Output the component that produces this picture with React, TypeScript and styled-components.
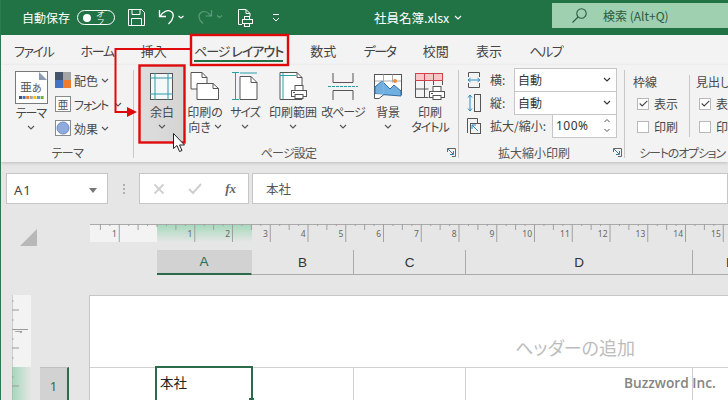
import React from "react";
import styled, { createGlobalStyle } from "styled-components";

const G = "#217346";
const FONT = `"Noto Sans CJK JP", "Noto Sans", sans-serif`;

const Global = createGlobalStyle`
  html, body { margin: 0; padding: 0; background: #e6e6e6; }
  body { font-family: ${FONT}; font-feature-settings: "palt"; }
  * { box-sizing: border-box; }
`;

const Window = styled.div`
  position: relative; width: 728px; height: 400px; overflow: hidden;
  background: #e6e6e6; border-left: 1px solid #2c7a50; display: flex; flex-direction: column;
`;
const TitleBar = styled.header`
  height: 35px; margin-left: -1px; background: ${G}; display: flex; align-items: center; color: #fff; flex: none;
`;
const AutoSave = styled.span`font-size: 12px; margin-left: 22px; width: 55px; color: #fff;`;
const Toggle = styled.span`
  width: 38px; height: 15px; border: 1px solid #fff; border-radius: 8px; display: flex; align-items: center;
  padding: 0 4px; gap: 5px; font-size: 8px; font-style: italic; line-height: 1; color: #fff;
  &::before { content: ""; width: 8px; height: 8px; border-radius: 50%; background: #fff; margin-left: 1px; }
`;
const Qat = styled.span<{ $l: number }>`display: flex; margin-left: ${p => p.$l}px; flex: none;`;
const FileName = styled.span`font-size: 12.5px; display: flex; align-items: center; gap: 5px; width: 178px; color: #fff;`;
const Search = styled.div`
  width: 176px; height: 25px; margin-bottom: 5px; background: #9fd0b0; display: flex; align-items: center; color: #2a5c40;
  font-size: 12px; padding-left: 20px; gap: 16px;
`;

const TabBar = styled.nav`
  height: 30px; background: #f3f3f3; display: flex; padding-left: 13px; gap: 27.2px; flex: none;
`;
const Tab = styled.span<{ $on?: boolean; $kana?: boolean }>`
  position: relative; font-size: 13px; line-height: 31px; color: #444; white-space: nowrap;
  ${p => p.$kana && `letter-spacing: -1.4px;`}
  ${p => p.$on && `letter-spacing: -1px; &::after{content:"";position:absolute;left:0;right:0;bottom:3px;height:2.5px;background:${G};}`}
`;
const Strong = styled.b`font-weight: 500;`;

const Ribbon = styled.section`
  height: 97px; background: #f3f3f3; display: flex; flex: none; color: #484848; font-size: 12px;
  box-shadow: 0 1px 3px rgba(0,0,0,.18);
`;
const Group = styled.div<{ $w: number; $last?: boolean }>`
  width: ${p => p.$w}px; flex: none; display: flex; flex-direction: column; position: relative;
  ${p => !p.$last && `&::after{content:"";position:absolute;right:0;top:5px;bottom:4px;width:1px;background:#c8c8c8;}`}
`;
const GroupBody = styled.div<{ $pl?: number }>`
  height: 80px; display: flex; padding-left: ${p => p.$pl ?? 0}px; flex: none;
`;
const GroupFoot = styled.div<{ $pr?: number; $pl?: number; $ls?: number }>`
  flex: 1; display: grid; grid-template-columns: 1fr auto 1fr; align-items: center; font-size: 12px; color: #555;
  padding: 0 ${p => p.$pr ?? 0}px 2px ${p => p.$pl ?? 0}px; line-height: 1; white-space: nowrap;
  letter-spacing: ${p => p.$ls ?? 0}px;
  & > span { grid-column: 2; }
`;
const Launcher = styled.svg`justify-self: end; margin-right: -13px; grid-column: 3;`;
const LargeBtn = styled.div<{ $w: number; $hot?: boolean; $top?: number }>`
  width: ${p => p.$w}px; flex: none; height: 78px; padding-top: ${p => p.$top ?? 7}px; display: flex; flex-direction: column; align-items: center;
  ${p => p.$hot && `background: linear-gradient(90deg,#dedede,#d4d4d4);`}
`;
const IconSlot = styled.div<{ $h?: number; $mb?: number }>`
  height: ${p => p.$h ?? 28}px; margin-bottom: ${p => p.$mb ?? 4}px; flex: none; display: flex; align-items: center; justify-content: center;
`;
const BtnLine = styled.div<{ $tight?: boolean }>`
  height: 15px; line-height: 15px; white-space: nowrap; display: flex; align-items: center; gap: 3px; flex: none;
  ${p => p.$tight && `letter-spacing: -1px;`}
`;
const SmallStack = styled.div`display: flex; flex-direction: column; padding-top: 3px; margin-left: -6px;`;
const SmallRow = styled.div`height: 24px; display: flex; align-items: center; gap: 3px; white-space: nowrap;`;
const Tight = styled.span`letter-spacing: -1.3px; margin-right: 3px;`;
const Scale = styled.div`display: flex; flex-direction: column; padding: 3px 0 0 8px;`;
const ScaleRow = styled.div`height: 23px; display: flex; align-items: center;`;
const ScaleIcon = styled.span`width: 23px; flex: none; display: flex;`;
const ScaleLabel = styled.span<{ $w: number }>`width: ${p => p.$w}px; flex: none; white-space: nowrap;`;
const Input = styled.div<{ $w: number }>`
  width: ${p => p.$w}px; height: 24px; background: #fff; border: 1px solid #c6c6c6; display: flex; align-items: center;
  justify-content: space-between; padding: 0 5px 0 3px; font-size: 12px; color: #333; flex: none;
`;
const Percent = styled.span`font-family: "Noto Sans", sans-serif; letter-spacing: .5px;`;
const OptCol = styled.div<{ $w: number; $sep?: boolean }>`
  width: ${p => p.$w}px; padding: 10px 0 0 8px; flex: none; position: relative;
  ${p => p.$sep && `&::after{content:"";position:absolute;right:0;top:10px;bottom:8px;width:1px;background:#c8c8c8;}`}
`;
const OptTitle = styled.div<{ $ml?: number }>`height: 14px; line-height: 14px; margin: 0 0 3px ${p => p.$ml ?? 0}px; white-space: nowrap;`;
const OptRow = styled.div<{ $pl?: number }>`height: 23px; display: flex; align-items: center; padding-left: ${p => p.$pl ?? 4}px; gap: 5px; white-space: nowrap;`;
const Check = styled.span`
  width: 12px; height: 12px; background: #fff; border: 1px solid #b8b8b8; display: flex; align-items: center; justify-content: center; flex: none;
`;

const FormulaBar = styled.div`height: 31px; margin: 11px 0 0 5px; display: flex; flex: none;`;
const Box = styled.div`background: #fff; border: 1px solid #c6c6c6; display: flex; align-items: center;`;
const NameBox = styled(Box)`
  width: 102px; justify-content: space-between; padding: 3px 10px 0 7px; font-family: "Noto Sans", sans-serif; font-size: 13px; letter-spacing: 1px; color: #444;
`;
const Grip = styled.div`width: 31px; display: flex; flex-direction: column; align-items: center; justify-content: center; gap: 2px;
  & > i { width: 2px; height: 2px; background: #b0b0b0; }
`;
const FxBox = styled(Box)`width: 110px; justify-content: space-between; padding: 0 12px 0 13px;`;
const Fx = styled.i`font-family: "Liberation Serif", serif; font-size: 13px; font-weight: 700; color: #666;`;
const FormulaInput = styled(Box)`flex: 1; margin-left: 3px; padding-left: 13px; font-size: 12.5px; color: #555;`;

const RulerRow = styled.div`height: 18px; margin-top: 20px; display: flex; flex: none;`;
const Corner = styled.div`
  width: 17px; height: 17px; margin: 5px 0 0 19px; background: #b8b8b8; clip-path: polygon(100% 0, 100% 100%, 0 100%);
`;
const RulerWrap = styled.div`margin-left: 53px; display: flex;`;
const COLS = "95px 102px 112px 227px 76px";
const ColHeaders = styled.div`
  height: 25px; margin: 8px 0 0 156px; display: grid; grid-template-columns: ${COLS}; flex: none;
  border-bottom: 1px solid #ababab;
`;
const ColHead = styled.div<{ $on?: boolean }>`
  display: flex; align-items: center; justify-content: center; font-family: "Liberation Sans", sans-serif; font-size: 13.5px;
  color: ${p => p.$on ? "#2b6b4a" : "#333"};
  border-right: 1px solid ${p => p.$on ? "transparent" : "#ababab"};
  ${p => p.$on && `background:#d2d2d2; border-bottom:2px solid #2b6b4a; margin-bottom:-1px;`}
`;
const SheetRow = styled.div`flex: 1; margin-top: 20px; display: flex; min-height: 0;`;
const VRulerWrap = styled.div`width: 19px; margin-left: 11px; flex: none; display: flex;`;
const RowHead = styled.div`
  width: 29px; margin: 72px 0 0 9px; flex: none; background: #d2d2d2; border-top: 1px solid #c0c0c0; border-right: 2px solid #2b6b4a;
  display: flex; justify-content: center; padding-top: 9px; font-family: "Noto Sans", sans-serif; font-size: 13px; color: #2b6b4a;
`;
const Page = styled.main`
  position: relative; flex: 1; margin-left: 20px; background: #fff; border-top: 1px solid #c6c6c6; border-left: 1px solid #c6c6c6;
`;
const HeaderZone = styled.div`
  height: 71px; padding: 37px 0 0 425px; font-size: 18px; line-height: 28px; color: #bdbdbd; white-space: nowrap;
`;
const CellRow = styled.div`
  height: 40px; padding-left: 67px; border-top: 1px solid #d0d0d0; display: grid; grid-template-columns: ${COLS};
`;
const Cell = styled.div`border-right: 1px solid #d0d0d0;`;
const ActiveCell = styled.div`
  position: relative; margin: -2px -1px 0 -2px; border: 2px solid #2b6b4a; border-bottom: 0; padding: 4px 0 0 3px; font-size: 13.5px; color: #222; line-height: 20px;
`;
const Handle = styled.i`position: absolute; right: -3px; top: 30px; width: 5px; height: 5px; background: #2b6b4a;`;
const Watermark = styled.div`
  position: absolute; left: 534px; top: 77px; font-family: "Open Sans", sans-serif; font-size: 13.7px; font-weight: 600; color: #858585; white-space: nowrap;
`;
const Overlay = styled.svg`position: absolute; left: -1px; top: 0; pointer-events: none;`;

const Chev = ({ c = "#555" }: { c?: string }) => (
  <svg width="8" height="5" viewBox="0 0 8 5"><path d="M1 1l3 3 3-3" fill="none" stroke={c} strokeWidth="1.1" /></svg>
);
const Launch = () => (
  <Launcher width="9" height="9" viewBox="0 0 9 9">
    <path d="M.5 4V.5H8.500V8.500H5" fill="none" stroke="#666" /><path d="M1 1l5 5M3 6.500h3.500V3" fill="none" stroke="#3a7ca5" />
  </Launcher>
);
const ThemeIcon = () => (
  <svg width="33" height="33" viewBox="0 0 33 33">
    <rect x=".5" y=".5" width="32" height="32" fill="#fff" stroke="#7a7a7a" />
    <path d="M24 1l8 8h-8z" fill="#8a9ab0" />
    <text x="5" y="21" fontSize="12" fill="#555" fontFamily={FONT}>亜</text>
    <text x="17" y="21" fontSize="10" fill="#555" fontFamily={FONT}>あ</text>
    {["#44546a", "#4472c4", "#ed7d31", "#a5a5a5", "#ffc000", "#5b9bd5", "#70ad47"].map((c, i) => (
      <rect key={c} x={4 + i * 3.6} y="25" width="3" height="3" fill={c} />
    ))}
  </svg>
);
const ColorIcon = () => (
  <svg width="16" height="16" viewBox="0 0 16 16">
    <rect width="8" height="8" fill="#44546a" /><rect x="8" width="8" height="8" fill="#a5a5a5" />
    <rect y="8" width="8" height="8" fill="#4472c4" /><rect x="8" y="8" width="8" height="8" fill="#ed7d31" />
  </svg>
);
const FontIcon = () => (
  <svg width="16" height="16" viewBox="0 0 16 16">
    <rect x=".5" y=".5" width="15" height="15" fill="#fff" stroke="#8a8a8a" />
    <text x="2.500" y="12.500" fontSize="11" fill="#555" fontFamily={FONT}>亜</text>
  </svg>
);
const EffectIcon = () => (
  <svg width="16" height="16" viewBox="0 0 16 16">
    <rect x=".5" y=".5" width="15" height="15" fill="#fff" stroke="#8a8a8a" />
    <circle cx="8" cy="8" r="6" fill="#8faadc" stroke="#6f8dc4" />
  </svg>
);
const MarginIcon = () => (
  <svg width="24" height="27" viewBox="0 0 24 27">
    <rect x=".5" y=".5" width="22" height="26" fill="#f6f8f8" stroke="#555" />
    <path d="M5 0v27M18 0v27M0 5h23M0 21h23" stroke="#2b9cab" fill="none" />
  </svg>
);
const OrientIcon = () => (
  <svg width="30" height="28" viewBox="0 0 30 28">
    <path d="M1 .5h11l5 5V17H1z" fill="#fff" stroke="#555" /><path d="M12 .5v5h5" fill="none" stroke="#555" />
    <path d="M7 11.500h16l5.500 5v11H7z" fill="#fff" stroke="#555" /><path d="M23 11.500v5h5.500" fill="none" stroke="#555" />
  </svg>
);
const SizeIcon = () => (
  <svg width="28" height="28" viewBox="0 0 28 28">
    <path d="M1 .5h7M4.500 1v26M1 27.500h7" fill="none" stroke="#2b9cab" />
    <path d="M9 4.500h11l6 6v17H9z" fill="#fff" stroke="#555" /><path d="M20 4.500v6h6" fill="none" stroke="#555" />
    <path d="M9 1h17" stroke="#2b9cab" />
  </svg>
);
const Printer = ({ x, y }: { x: number; y: number }) => (
  <g transform={`translate(${x} ${y})`}>
    <rect x="4" y=".5" width="8" height="5" fill="#fff" stroke="#555" />
    <rect x=".5" y="5.500" width="15" height="6" fill="#fff" stroke="#555" />
    <rect x="4" y="9.500" width="8" height="4" fill="#fff" stroke="#555" />
    <rect x="2" y="7" width="2" height="1" fill="#555" />
  </g>
);
const AreaIcon = () => (
  <svg width="28" height="28" viewBox="0 0 28 28">
    <path d="M1 .5h17l5 5v22H1z" fill="#fff" stroke="#555" /><path d="M18 .5v5h5" fill="none" stroke="#555" />
    <path d="M4 1v26M1 3.500h16" stroke="#2b9cab" fill="none" />
    <Printer x={12} y={13} />
  </svg>
);
const BreakIcon = () => (
  <svg width="30" height="27" viewBox="0 0 30 27">
    <path d="M5 0v9.500h20V0M5 27V17.500h20V27" fill="none" stroke="#555" />
    <path d="M0 13.500h30" stroke="#2b9cab" strokeDasharray="3 1" />
  </svg>
);
const BackIcon = () => (
  <svg width="28" height="25" viewBox="0 0 28 25">
    <rect x=".5" y=".5" width="27" height="20" fill="#fff" stroke="#555" />
    <path d="M1 20V13l7-6 8 8 4-4 7 6v5z" fill="#71afe0" stroke="#2f6f9f" />
    <path d="M9.500 .5v20M18.500 .5v8M1 7h26" stroke="#aaa" fill="none" />
    <circle cx="21" cy="7" r="2" fill="#ed8b3c" />
    <path d="M.5 20v4.500H5l5-4" fill="#fff" stroke="#555" />
  </svg>
);
const TitleIcon = () => (
  <svg width="30" height="27" viewBox="0 0 30 27">
    <rect x=".5" y=".5" width="27" height="7" fill="#f6c6c9" stroke="#d0434c" />
    <path d="M9.500 .5v7M18.500 .5v7" stroke="#d0434c" />
    <path d="M.5 8v16.500h13M.5 16h13M9.500 8v17M18.500 8v4M27.500 8v4" fill="none" stroke="#555" />
    <Printer x={14} y={13} />
  </svg>
);
const CheckMark = () => (
  <svg width="9" height="7" viewBox="0 0 9 7"><path d="M.7 3.500l2.500 2.500L8.300.8" fill="none" stroke="#444" strokeWidth="1.1" /></svg>
);
const SelectChev = () => <Chev c="#333" />;

const Ruler = () => {
  const u = 37.75, z = 67;
  const marks: React.ReactNode[] = [];
  for (let n = -2; n < 17; n++) {
    const x = z + n * u;
    for (let k = 0; k < 4; k++) {
      const tx = x + k * u / 4;
      if (tx < 0 || tx > 638) continue;
      const h = k === 0 ? (n === 0 ? 3 : 18) : k === 2 ? 6 : 2;
      if (n === -2 && k < 2) continue;
      marks.push(<line key={`${n}-${k}`} x1={tx} x2={tx} y1="0" y2={h} stroke="#a0a0a0" />);
    }
    if (n !== 0 && n > -2) marks.push(
      <text key={`t${n}`} x={x - 2.5} y="12.5" textAnchor="end" fontSize="8.5" fill="#666" fontFamily='"Noto Sans", sans-serif'>{Math.abs(n)}</text>
    );
  }
  return (
    <svg width="638" height="18" viewBox="0 0 638 18">
      <defs>
        <linearGradient id="hg" x1="0" y1="0" x2="0" y2="1">
          <stop offset="0" stopColor="#a3d8ba" /><stop offset="1" stopColor="#e6e6e6" />
        </linearGradient>
      </defs>
      <rect width="67" height="18" fill="#f3f3f3" />
      <rect x="67" width="95" height="18" fill="url(#hg)" />
      <line x1="0" x2="638" y1=".5" y2=".5" stroke="#aaa" />
      {marks}
    </svg>
  );
};
const VRuler = () => (
  <svg width="19" height="105" viewBox="0 0 19 105">
    <defs>
      <linearGradient id="vg" x1="0" y1="0" x2="1" y2="0">
        <stop offset="0" stopColor="#a3d8ba" /><stop offset="1" stopColor="#e6e6e6" />
      </linearGradient>
    </defs>
    <rect width="19" height="72" fill="#f3f3f3" />
    <rect y="72" width="19" height="33" fill="url(#vg)" />
    <path d="M0 0v105" stroke="#aaa" />
    {[6, 25, 44, 63, 82].map(y => <path key={y} d="M0 0h1.500" transform={`translate(0 ${y})`} stroke="#999" />)}
    {[15, 53, 91].map(y => <path key={y} d="M0 0h7" transform={`translate(0 ${y})`} stroke="#999" />)}
    <path d="M0 34.500h16" stroke="#999" />
    <text transform="translate(3 39) rotate(-90) scale(-1 1) rotate(180)" fontSize="8" fill="#666" fontFamily='"Noto Sans", sans-serif'>1</text>
  </svg>
);

const layout = [["余白"], ["印刷の", "向き"], ["サイズ"], ["印刷範囲"], ["改ページ"], ["背景"], ["印刷", "タイトル"]];
const widths = [46, 40, 40, 56, 44, 46, 38];
const icons = [<MarginIcon />, <OrientIcon />, <SizeIcon />, <AreaIcon />, <BreakIcon />, <BackIcon />, <TitleIcon />];
const isKana = (s: string) => /[ァ-ヶー]/.test(s);

export default function App() {
  return (
    <Window>
      <Global />
      <TitleBar>
        <AutoSave>自動保存</AutoSave>
        <Toggle>オフ</Toggle>
        <Qat $l={13}>
          <svg width="17" height="17" viewBox="0 0 17 17" fill="none" stroke="#fff">
            <path d="M.5.5h13l3 3v13H.5z" /><path d="M4 .5v5h8v-5M3.500 16.500v-7h10v7" />
          </svg>
        </Qat>
        <Qat $l={13}>
          <svg width="26" height="17" viewBox="0 0 26 17" fill="none" stroke="#fff" strokeWidth="1.3">
            <path d="M1.500 1v6.500H8M2 7.500C5 2.500 9.500 .5 13 2.500s3 7.500-2.500 12.500" />
            <path d="M20.500 7l2.500 2 2.500-2" />
          </svg>
        </Qat>
        <Qat $l={13}>
          <svg width="27" height="17" viewBox="0 0 27 17" fill="none" stroke="#5d9c7b" strokeWidth="1.2">
            <path d="M14.500 1v6h-6M14 7c-3-4-7-5.500-10-3.500s-3 7 2 11" />
            <path d="M20 6.500l2.500 2 2.500-2" />
          </svg>
        </Qat>
        <Qat $l={13}>
          <svg width="16" height="18" viewBox="0 0 16 18" fill="none" stroke="#fff">
            <path d="M9 .5H1.500v15H5M9 .5l4 4v3M9 .5v4h4" />
            <rect x="7.500" y="7.500" width="5" height="3" /><rect x="5.500" y="10.500" width="10" height="4" /><rect x="7.500" y="14.500" width="5" height="3" />
          </svg>
        </Qat>
        <Qat $l={19}>
          <svg width="8" height="8" viewBox="0 0 8 8" fill="none" stroke="#fff"><path d="M1 .5h6M1 4l3 3 3-3" /></svg>
        </Qat>
        <Qat $l={94}>
          <FileName>社員名簿.xlsx <Chev c="#fff" /></FileName>
        </Qat>
        <Search>
          <svg width="15" height="15" viewBox="0 0 15 15" fill="none" stroke="#2a5c40" strokeWidth="1.1"><circle cx="9.500" cy="5.500" r="4.700" /><path d="M6 9l-5.500 5.500" /></svg>
          <span>検索 (Alt+Q)</span>
        </Search>
      </TitleBar>

      <TabBar>
        <Tab $kana>ファイル</Tab><Tab $kana>ホーム</Tab><Tab>挿入</Tab>
        <Tab $on>ページ <Strong>レイアウト</Strong></Tab>
        <Tab>数式</Tab><Tab $kana>データ</Tab><Tab>校閲</Tab><Tab>表示</Tab><Tab $kana>ヘルプ</Tab>
      </TabBar>

      <Ribbon>
        <Group $w={133}>
          <GroupBody>
            <LargeBtn $w={60} $top={6}>
              <IconSlot $h={33} $mb={1}><ThemeIcon /></IconSlot>
              <BtnLine $tight>テーマ</BtnLine>
              <BtnLine><Chev /></BtnLine>
            </LargeBtn>
            <SmallStack>
              <SmallRow><ColorIcon />配色<Chev /></SmallRow>
              <SmallRow><FontIcon /><Tight>フォント</Tight><Chev /></SmallRow>
              <SmallRow><EffectIcon />効果<Chev /></SmallRow>
            </SmallStack>
          </GroupBody>
          <GroupFoot $ls={-.5}><span>テーマ</span></GroupFoot>
        </Group>

        <Group $w={325}>
          <GroupBody $pl={5}>
            {layout.map((lines, i) => (
              <LargeBtn key={lines[0]} $w={widths[i]} $hot={i === 0}>
                <IconSlot>{icons[i]}</IconSlot>
                {lines.map((l, j) => (
                  <BtnLine key={l} $tight={isKana(l)}>{l}{i === 1 && j === 1 && <Chev />}</BtnLine>
                ))}
                {lines.length === 1 && <BtnLine><Chev /></BtnLine>}
              </LargeBtn>
            ))}
          </GroupBody>
          <GroupFoot $pr={16} $ls={-.8}><span>ページ設定</span><Launch /></GroupFoot>
        </Group>

        <Group $w={166}>
          <GroupBody>
            <Scale>
              <ScaleRow>
                <ScaleIcon><svg width="14" height="16" viewBox="0 0 14 16" fill="none" stroke="#555"><path d="M1.500 5V.5h11V5M1.500 11v4.500h11V11" /><path d="M1 8h12M3.500 6L1 8l2.500 2M10.500 6L13 8l-2.500 2" stroke="#2b8cc4" /></svg></ScaleIcon>
                <ScaleLabel $w={24}>横:</ScaleLabel>
                <Input $w={103}>自動<SelectChev /></Input>
              </ScaleRow>
              <ScaleRow>
                <ScaleIcon><svg width="14" height="18" viewBox="0 0 14 18" fill="none" stroke="#555"><rect x="7.500" y=".5" width="6" height="17" /><path d="M3 1v16M1 3.500L3 1l2 2.500M1 14.500L3 17l2-2.500" stroke="#2b8cc4" /></svg></ScaleIcon>
                <ScaleLabel $w={24}>縦:</ScaleLabel>
                <Input $w={103}>自動<SelectChev /></Input>
              </ScaleRow>
              <ScaleRow>
                <ScaleIcon><svg width="14" height="16" viewBox="0 0 14 16" fill="none" stroke="#555"><path d="M.5 15V.5h10V5" /><rect x="3.500" y="5.500" width="10" height="10" fill="#f3f3f3" /><path d="M5 7h4M5 7v4M5 7l6 6" stroke="#2b8cc4" /></svg></ScaleIcon>
                <ScaleLabel $w={62}>拡大/縮小:</ScaleLabel>
                <Input $w={65}><Percent>100%</Percent>
                  <svg width="8" height="15" viewBox="0 0 8 15" fill="none" stroke="#555"><path d="M1.500 4L4 1.500 6.500 4M1.500 11L4 13.500 6.500 11" /></svg>
                </Input>
              </ScaleRow>
            </Scale>
          </GroupBody>
          <GroupFoot $pr={16}><span>拡大縮小印刷</span><Launch /></GroupFoot>
        </Group>

        <Group $w={104} $last>
          <GroupBody>
            <OptCol $w={65} $sep>
              <OptTitle>枠線</OptTitle>
              <OptRow><Check><CheckMark /></Check>表示</OptRow>
              <OptRow><Check />印刷</OptRow>
            </OptCol>
            <OptCol $w={39}>
              <OptTitle $ml={-2}>見出し</OptTitle>
              <OptRow $pl={1}><Check><CheckMark /></Check>表示</OptRow>
              <OptRow $pl={1}><Check />印刷</OptRow>
            </OptCol>
          </GroupBody>
          <GroupFoot $pl={10} $ls={-1.2}><span>シートのオプション</span></GroupFoot>
        </Group>
      </Ribbon>

      <FormulaBar>
        <NameBox>A1
          <svg width="8" height="5" viewBox="0 0 8 5"><path d="M0 0h8L4 5z" fill="#777" /></svg>
        </NameBox>
        <Grip><i /><i /><i /></Grip>
        <FxBox>
          <svg width="12" height="12" viewBox="0 0 12 12" fill="none" stroke="#cfcfcf" strokeWidth="1.800"><path d="M1.500 1.500l9 9M10.500 1.500l-9 9" /></svg>
          <svg width="14" height="12" viewBox="0 0 14 12" fill="none" stroke="#cfcfcf" strokeWidth="2"><path d="M1 6l4 4 8-9" /></svg>
          <Fx>fx</Fx>
        </FxBox>
        <FormulaInput>本社</FormulaInput>
      </FormulaBar>

      <RulerRow>
        <Corner />
        <RulerWrap><Ruler /></RulerWrap>
      </RulerRow>

      <ColHeaders>
        <ColHead $on>A</ColHead><ColHead>B</ColHead><ColHead>C</ColHead><ColHead>D</ColHead><ColHead>E</ColHead>
      </ColHeaders>

      <SheetRow>
        <VRulerWrap><VRuler /></VRulerWrap>
        <RowHead>1</RowHead>
        <Page>
          <HeaderZone>ヘッダーの追加</HeaderZone>
          <CellRow>
            <ActiveCell>本社<Handle /></ActiveCell>
            <Cell /><Cell /><Cell />
          </CellRow>
          <Watermark>Buzzword Inc.</Watermark>
        </Page>
      </SheetRow>

      <Overlay width="728" height="400" viewBox="0 0 728 400" fill="none">
        <rect x="191" y="35" width="97" height="30" stroke="#e00a0a" strokeWidth="2.400" />
        <rect x="139.500" y="65.500" width="45" height="77" stroke="#e00a0a" strokeWidth="2.400" />
        <path d="M190 49H115.500V112H128" stroke="#e00a0a" strokeWidth="2" />
        <path d="M127 107l10 5-10 5z" fill="#e00a0a" />
        <path d="M173.500 133.500v15l3.500-3 2.500 6 2.500-1-2.500-5.500h5z" fill="#fff" stroke="#222" />
      </Overlay>
    </Window>
  );
}
